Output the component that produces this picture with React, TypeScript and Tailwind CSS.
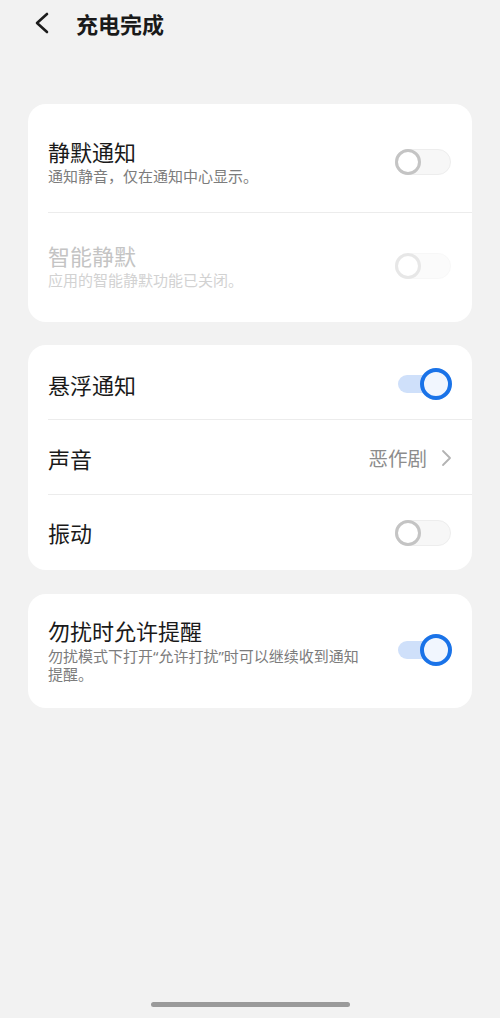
import React from 'react';

const FONT = { fontFamily: '"Noto Sans CJK SC", "Noto Sans", sans-serif' };
// 引号用西文字体，宽度更窄
const LATIN_FIRST = { fontFamily: '"Noto Sans", "Noto Sans CJK SC", sans-serif' };

// 开关
const Toggle = ({ on, disabled }: { on?: boolean; disabled?: boolean }) => {
  if (on) {
    return (
      <div className="relative w-[56px] h-[32px] shrink-0">
        <div className="absolute left-[2px] top-[7px] w-[46px] h-[18px] rounded-full bg-[#cfe0fa]" />
        <div className="absolute right-0 top-0 w-[32px] h-[32px] rounded-full border-[4px] border-[#1a73e8] bg-[#f1f6fe]" />
      </div>
    );
  }
  return (
    <div className={`relative w-[56px] h-[26px] shrink-0 ${disabled ? 'opacity-40' : ''}`}>
      <div className="absolute inset-0 rounded-full border border-[#ededed] bg-[#f7f7f7]" />
      <div className="absolute left-0 top-0 w-[26px] h-[26px] rounded-full border-[3px] border-[#c4c4c4] bg-white" />
    </div>
  );
};

const Divider = () => <div className="ml-[20px] h-px bg-[#ececec]" />;

export default function App() {
  return (
    <div className="min-h-[1018px] bg-[#f2f2f2] flex flex-col" style={FONT}>
      {/* 头部 */}
      <div className="h-[46px] flex items-center pl-[34px]">
        <svg width="16" height="22" viewBox="0 0 16 22" fill="none">
          <path d="M13 2 L3 11 L13 20" stroke="#1c1c1c" strokeWidth="2.6" strokeLinecap="round" strokeLinejoin="round" />
        </svg>
        <span className="ml-[26px] text-[22px] font-bold text-[#1a1a1a] leading-none">充电完成</span>
      </div>

      <div className="mt-[58px] px-[28px] flex flex-col gap-[24px]">
        {/* 卡片1 */}
        <div className="bg-white rounded-[18px]">
          <div className="flex items-center pl-[20px] pr-[21px] pt-[33px] pb-[25px]">
            <div className="flex-1">
              <div className="text-[22px] leading-[28px] text-[#1a1a1a]">静默通知</div>
              <div className="text-[15px] leading-[22px] text-[#7c7c7c]">通知静音，仅在通知中心显示。</div>
            </div>
            <Toggle />
          </div>
          <Divider />
          <div className="flex items-center pl-[20px] pr-[21px] pt-[28px] pb-[31px]">
            <div className="flex-1">
              <div className="text-[22px] leading-[28px] text-[#c4c4c4]">智能静默</div>
              <div className="text-[15px] leading-[22px] text-[#d2d2d2]">应用的智能静默功能已关闭。</div>
            </div>
            <Toggle disabled />
          </div>
        </div>

        {/* 卡片2 */}
        <div className="bg-white rounded-[18px] -mt-px">
          <div className="h-[74px] flex items-center pl-[20px] pr-[20px] pt-[4px]">
            <div className="flex-1 text-[22px] text-[#1a1a1a]">悬浮通知</div>
            <Toggle on />
          </div>
          <Divider />
          <div className="h-[74px] flex items-center pl-[20px] pr-[20px] pt-[2px]">
            <div className="flex-1 text-[22px] text-[#1a1a1a]">声音</div>
            <span className="text-[19.5px] text-[#8c8c8c]">恶作剧</span>
            <svg className="ml-[13px]" width="12" height="18" viewBox="0 0 12 18" fill="none">
              <path d="M3 2 L10 9 L3 16" stroke="#b3b3b3" strokeWidth="1.8" strokeLinecap="round" strokeLinejoin="round" />
            </svg>
          </div>
          <Divider />
          <div className="h-[75px] flex items-center pl-[20px] pr-[21px]">
            <div className="flex-1 text-[22px] text-[#1a1a1a]">振动</div>
            <Toggle />
          </div>
        </div>

        {/* 卡片3 */}
        <div className="bg-white rounded-[18px] flex items-center pl-[20px] pr-[20px] pt-[22px] pb-[25px]">
          <div className="flex-1 mr-[30px]">
            <div className="text-[22px] leading-[28px] text-[#1a1a1a]">勿扰时允许提醒</div>
            <div className="mt-[3px] text-[15px] leading-[18px] text-[#7c7c7c]" style={LATIN_FIRST}>
              勿扰模式下打开“允许打扰”时可以继续收到通知提醒。
            </div>
          </div>
          <Toggle on />
        </div>
      </div>

      <div className="flex-1" />
      {/* 底部指示条 */}
      <div className="flex justify-center pb-[11px]">
        <div className="w-[199px] h-[5px] rounded-full bg-[#9a9a9a]" />
      </div>
    </div>
  );
}
